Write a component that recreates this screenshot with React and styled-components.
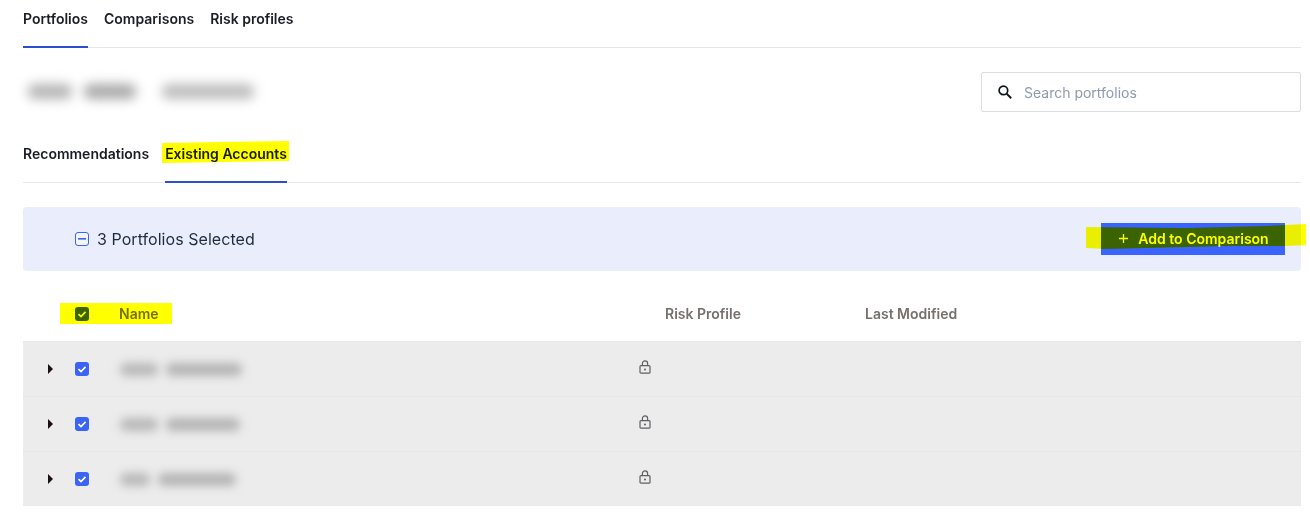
import React from "react";
import styled, { createGlobalStyle } from "styled-components";

const Global = createGlobalStyle`
  html, body { margin: 0; padding: 0; background: #fff; }
  body { font-family: Inter, "Liberation Sans", sans-serif; color: #1c2230; }
  * { box-sizing: border-box; }
`;

const Page = styled.div`
  width: 1310px;
  height: 516px;
  padding: 0 9px 0 23px;
  position: relative;
  overflow: hidden;
`;

const TabBar = styled.div`
  display: flex;
  gap: 16px;
  height: 48px;
  border-bottom: 1px solid #e6e6e6;
`;

const Tab = styled.div`
  height: 48px;
  padding-top: 10px;
  font-size: 14px;
  font-weight: 600;
  line-height: 18px;
  color: #1a1d26;
  border-bottom: 2px solid ${(p) => (p.$active ? "#2b4fd0" : "transparent")};
`;

const TitleRow = styled.div`
  height: 87px;
  padding-top: 24px;
  display: flex;
  justify-content: space-between;
  align-items: flex-start;
`;

const BlurGroup = styled.div`
  display: flex;
  align-items: center;
  margin: ${(p) => p.$margin || "0"};
`;

const Smudge = styled.div`
  width: ${(p) => p.$w}px;
  height: ${(p) => p.$h}px;
  margin-left: ${(p) => p.$ml || 0}px;
  border-radius: 6px;
  background: ${(p) => p.$c};
  filter: blur(${(p) => p.$blur}px);
`;

const SearchBox = styled.div`
  width: 320px;
  height: 40px;
  border: 1.5px solid #dedede;
  border-radius: 2px;
  display: flex;
  align-items: center;
  gap: 11px;
  padding-left: 15px;
`;

const SearchText = styled.span`
  font-size: 14px;
  color: #8f9aae;
`;

const SelectionPanel = styled.div`
  margin-top: 24px;
  height: 64px;
  background: #eaeefc;
  border-radius: 4px;
  display: flex;
  align-items: center;
  justify-content: space-between;
  padding: 0 16px 0 52px;
`;

const SelectionInfo = styled.div`
  display: flex;
  align-items: center;
  gap: 8px;
  font-size: 16px;
  letter-spacing: 0.05px;
  color: #1f2a3c;
`;

const Box = styled.span`
  width: 14px;
  height: 14px;
  flex: none;
  border-radius: 3px;
  display: flex;
  align-items: center;
  justify-content: center;
  background: ${(p) => (p.$outline ? "#f4f6ff" : "#3b63f5")};
  border: ${(p) => (p.$outline ? "1px solid #3b63f5" : "none")};
`;

const AddButton = styled.div`
  width: 184px;
  height: 32px;
  background: #3b63ff;
  padding: 0 0 1px 2px;
  display: flex;
  align-items: center;
  justify-content: center;
  gap: 10px;
  font-size: 14px;
  font-weight: 600;
  color: #fff;
`;

const Grid = styled.div`
  display: grid;
  grid-template-columns: 52px 44px 520px 26px 200px 1fr;
  align-items: center;
`;

const HeadRow = styled(Grid)`
  height: 70px;
  padding-top: 16px;
  font-size: 14px;
  line-height: 16px;
  font-weight: 600;
  color: #77706c;
`;

const HeadLabel = styled.div`
  grid-column: ${(p) => p.$column || "auto"};
`;

const Row = styled(Grid)`
  height: 55px;
  background: #ececec;
  border-top: 1px solid #e6e6e6;
`;

const Caret = styled.span`
  justify-self: start;
  margin-left: 25px;
  width: 0;
  height: 0;
  border-left: 5px solid #1a1014;
  border-top: 5px solid transparent;
  border-bottom: 5px solid transparent;
`;

const LockSlot = styled.span`
  display: flex;
  margin-bottom: 4px;
`;

const Highlight = styled.div`
  position: absolute;
  left: ${(p) => p.$x}px;
  top: ${(p) => p.$y}px;
  width: ${(p) => p.$w}px;
  height: ${(p) => p.$h}px;
  background: #ffff00;
  mix-blend-mode: multiply;
  pointer-events: none;
  clip-path: ${(p) => p.$clip || "none"};
`;

const Check = () => (
  <svg width="10" height="10" viewBox="0 0 10 10" fill="none">
    <path d="M1.5 5.2 4 7.6 8.5 2.8" stroke="#fff" strokeWidth="1.7" />
  </svg>
);

const Lock = () => (
  <svg width="12" height="14" viewBox="0 0 12 14" fill="none" stroke="#5f5f63" strokeWidth="1.2">
    <rect x="1" y="5.6" width="10" height="7.6" rx="1" />
    <path d="M3.4 5.6V3.4a2.6 2.6 0 0 1 5.2 0v2.2" />
    <circle cx="6" cy="9.4" r="1" fill="#5f5f63" stroke="none" />
  </svg>
);

const SearchIcon = () => (
  <svg width="16" height="16" viewBox="0 0 16 16" fill="none" stroke="#0d1420" strokeWidth="1.7">
    <circle cx="6.4" cy="6.4" r="4.3" />
    <path d="M9.6 9.6 14.2 14.2" strokeWidth="2" />
  </svg>
);

const PlusIcon = () => (
  <svg width="9" height="9" viewBox="0 0 9 9" stroke="#fff" strokeWidth="1.3">
    <path d="M4.5 0v9M0 4.5h9" />
  </svg>
);

const rows = [
  [38, 76],
  [38, 74],
  [30, 78],
];

export default function App() {
  return (
    <Page>
      <Global />
      <TabBar>
        <Tab $active>Portfolios</Tab>
        <Tab>Comparisons</Tab>
        <Tab>Risk profiles</Tab>
      </TabBar>
      <TitleRow>
        <BlurGroup $margin="12px 0 0 5px">
          <Smudge $w={44} $h={15} $c="#b4b4b4" $blur={6} />
          <Smudge $w={52} $h={15} $c="#a8a8a8" $blur={6} $ml={12} />
          <Smudge $w={92} $h={15} $c="#bcbcbc" $blur={6} $ml={26} />
        </BlurGroup>
        <SearchBox>
          <SearchIcon />
          <SearchText>Search portfolios</SearchText>
        </SearchBox>
      </TitleRow>
      <TabBar>
        <Tab>Recommendations</Tab>
        <Tab $active>Existing Accounts</Tab>
      </TabBar>
      <SelectionPanel>
        <SelectionInfo>
          <Box $outline>
            <svg width="8" height="2" viewBox="0 0 8 2">
              <rect width="8" height="1.6" fill="#3b63f5" />
            </svg>
          </Box>
          3 Portfolios Selected
        </SelectionInfo>
        <AddButton>
          <PlusIcon />
          <span>Add to Comparison</span>
        </AddButton>
      </SelectionPanel>
      <HeadRow>
        <span />
        <Box>
          <Check />
        </Box>
        <HeadLabel $column="3 / span 2">Name</HeadLabel>
        <HeadLabel>Risk Profile</HeadLabel>
        <HeadLabel>Last Modified</HeadLabel>
      </HeadRow>
      {rows.map(([a, b], i) => (
        <Row key={i}>
          <Caret />
          <Box>
            <Check />
          </Box>
          <BlurGroup $margin="0 0 0 1px">
            <Smudge $w={a} $h={13} $c="#b8b8b8" $blur={5} />
            <Smudge $w={b} $h={13} $c="#b4b4b4" $blur={5} $ml={8} />
          </BlurGroup>
          <LockSlot>
            <Lock />
          </LockSlot>
        </Row>
      ))}
      <Highlight
        $x={162}
        $y={141}
        $w={127}
        $h={22}
        $clip="polygon(0 2px, 60px 1px, 127px 0, 127px 20px, 60px 21px, 0 22px)"
      />
      <Highlight $x={60} $y={303} $w={112} $h={21} />
      <Highlight
        $x={1086}
        $y={223}
        $w={220}
        $h={28}
        $clip="polygon(0 4px, 100px 5px, 140px 4px, 180px 3px, 220px 1px, 220px 22px, 200px 23px, 140px 23px, 100px 24px, 20px 26px, 0 25px)"
      />
    </Page>
  );
}
